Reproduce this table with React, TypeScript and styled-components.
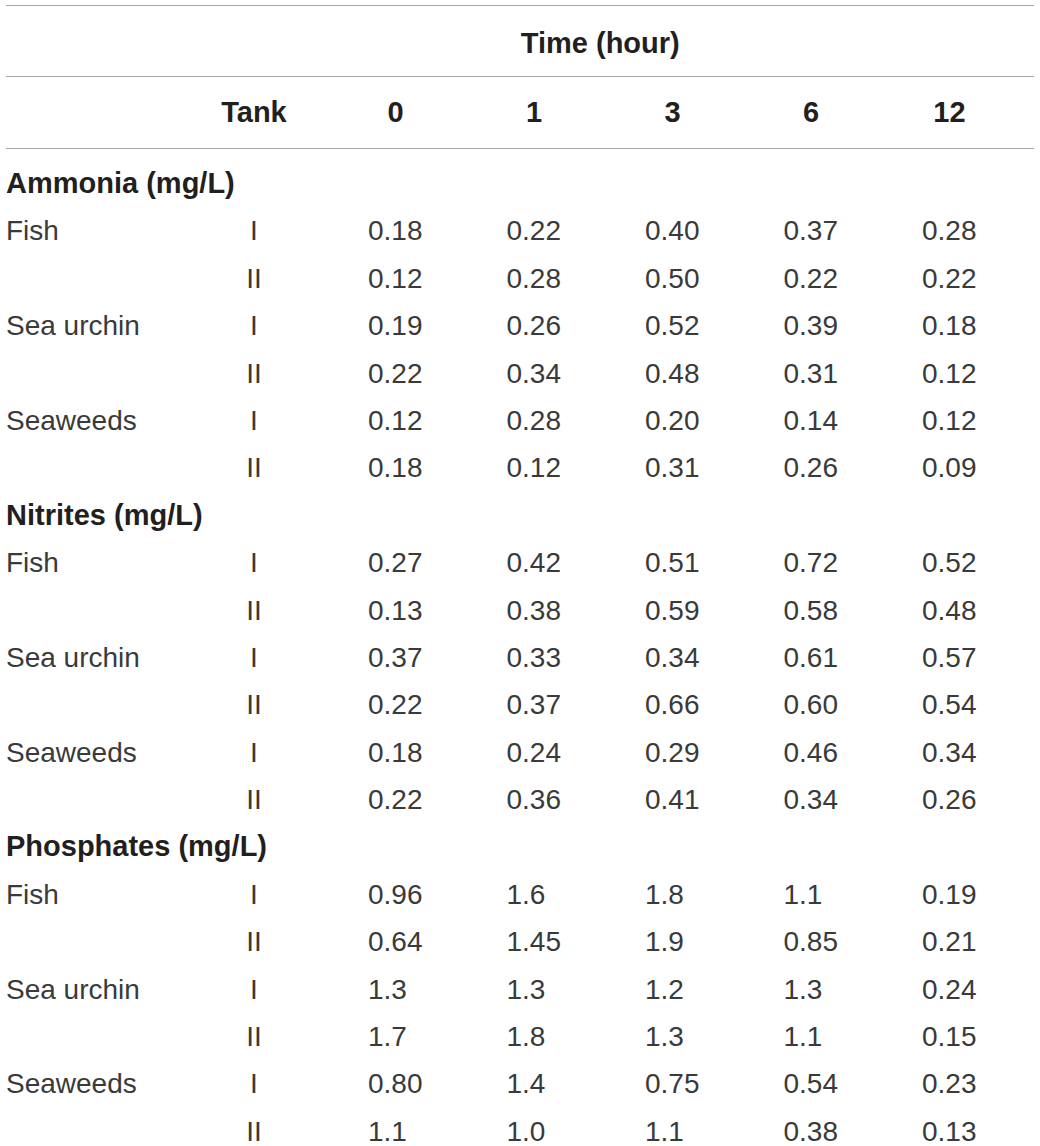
import React from "react";
import styled, { createGlobalStyle } from "styled-components";

const Global = createGlobalStyle`
  html, body { margin: 0; padding: 0; background: #ffffff; }
  body { font-family: "Liberation Sans", Arial, Helvetica, sans-serif; color: #231f20; }
`;

const COLS = "179px 138px repeat(5, 138.5px) 1fr";

const Table = styled.div`
  margin: 5px 6px 0 6px;
  border-top: 1px solid #a9a9a9;
`;

const TitleRow = styled.div`
  display: grid;
  grid-template-columns: ${COLS};
  height: 66px;
  padding-top: 4px;
  border-bottom: 1px solid #a9a9a9;
  align-items: center;
`;

const TimeTitle = styled.div`
  grid-column: 2 / 8;
  text-align: center;
  font-weight: 700;
  font-size: 29px;
  line-height: 66px;
`;

const HeadRow = styled.div`
  display: grid;
  grid-template-columns: ${COLS};
  height: 71px;
  border-bottom: 1px solid #a9a9a9;
  align-items: center;
  font-weight: 700;
  font-size: 29px;
`;

const HeadTank = styled.div`
  grid-column: 2;
  text-align: center;
`;

const HeadNum = styled.div`
  padding-left: 45px;
  & > span {
    display: block;
    width: 55px;
    text-align: center;
  }
`;

const Body = styled.div`
  padding-top: 11px;
`;

const Row = styled.div`
  display: grid;
  grid-template-columns: ${COLS};
  height: 47.4px;
  align-items: center;
  font-size: 28px;
  line-height: 47.4px;
`;

const Section = styled.div`
  grid-column: 1 / -1;
  font-weight: 700;
  font-size: 29px;
  color: #231f20;
`;

const Label = styled.div`
  color: #3a3a3a;
  white-space: nowrap;
`;

const TankCell = styled.div`
  text-align: center;
  color: #3a3a3a;
`;

const Value = styled.div`
  padding-left: 45px;
  color: #3a3a3a;
`;

type DataRow = { label: string; tank: string; values: string[] };
type Group = { title: string; rows: DataRow[] };

const groups: Group[] = [
  {
    title: "Ammonia (mg/L)",
    rows: [
      { label: "Fish", tank: "I", values: ["0.18", "0.22", "0.40", "0.37", "0.28"] },
      { label: "", tank: "II", values: ["0.12", "0.28", "0.50", "0.22", "0.22"] },
      { label: "Sea urchin", tank: "I", values: ["0.19", "0.26", "0.52", "0.39", "0.18"] },
      { label: "", tank: "II", values: ["0.22", "0.34", "0.48", "0.31", "0.12"] },
      { label: "Seaweeds", tank: "I", values: ["0.12", "0.28", "0.20", "0.14", "0.12"] },
      { label: "", tank: "II", values: ["0.18", "0.12", "0.31", "0.26", "0.09"] },
    ],
  },
  {
    title: "Nitrites (mg/L)",
    rows: [
      { label: "Fish", tank: "I", values: ["0.27", "0.42", "0.51", "0.72", "0.52"] },
      { label: "", tank: "II", values: ["0.13", "0.38", "0.59", "0.58", "0.48"] },
      { label: "Sea urchin", tank: "I", values: ["0.37", "0.33", "0.34", "0.61", "0.57"] },
      { label: "", tank: "II", values: ["0.22", "0.37", "0.66", "0.60", "0.54"] },
      { label: "Seaweeds", tank: "I", values: ["0.18", "0.24", "0.29", "0.46", "0.34"] },
      { label: "", tank: "II", values: ["0.22", "0.36", "0.41", "0.34", "0.26"] },
    ],
  },
  {
    title: "Phosphates (mg/L)",
    rows: [
      { label: "Fish", tank: "I", values: ["0.96", "1.6", "1.8", "1.1", "0.19"] },
      { label: "", tank: "II", values: ["0.64", "1.45", "1.9", "0.85", "0.21"] },
      { label: "Sea urchin", tank: "I", values: ["1.3", "1.3", "1.2", "1.3", "0.24"] },
      { label: "", tank: "II", values: ["1.7", "1.8", "1.3", "1.1", "0.15"] },
      { label: "Seaweeds", tank: "I", values: ["0.80", "1.4", "0.75", "0.54", "0.23"] },
      { label: "", tank: "II", values: ["1.1", "1.0", "1.1", "0.38", "0.13"] },
    ],
  },
];

const hours = ["0", "1", "3", "6", "12"];

export default function App() {
  return (
    <>
      <Global />
      <Table>
        <TitleRow>
          <TimeTitle>Time (hour)</TimeTitle>
        </TitleRow>
        <HeadRow>
          <HeadTank>Tank</HeadTank>
          {hours.map((h) => (
            <HeadNum key={h}>
              <span>{h}</span>
            </HeadNum>
          ))}
        </HeadRow>
        <Body>
          {groups.map((g) => (
            <React.Fragment key={g.title}>
              <Row>
                <Section>{g.title}</Section>
              </Row>
              {g.rows.map((r, i) => (
                <Row key={i}>
                  <Label>{r.label}</Label>
                  <TankCell>{r.tank}</TankCell>
                  {r.values.map((v, j) => (
                    <Value key={j}>{v}</Value>
                  ))}
                </Row>
              ))}
            </React.Fragment>
          ))}
        </Body>
      </Table>
    </>
  );
}
